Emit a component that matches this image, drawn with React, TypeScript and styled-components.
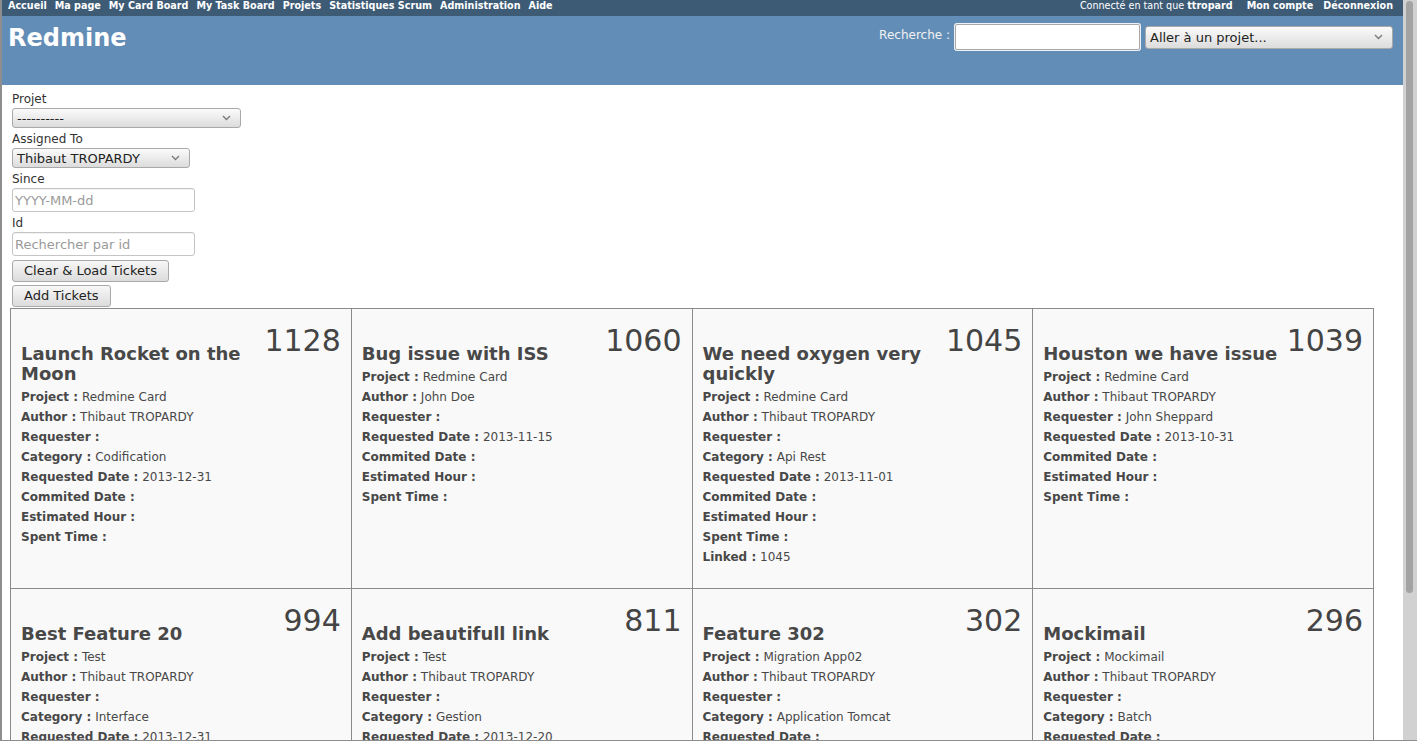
import React from 'react';
import styled, { createGlobalStyle } from 'styled-components';

const GlobalStyle = createGlobalStyle`
  html, body {
    margin: 0;
    padding: 0;
    overflow: hidden;
    background: #fff;
  }
  body {
    font-family: "DejaVu Sans", Verdana, sans-serif;
    font-size: 12px;
    color: #484848;
  }
  * {
    box-sizing: border-box;
  }
`;

type Ticket = {
  id: number;
  title: string;
  fields: [string, string][];
};

const tickets: Ticket[] = [
  {
    id: 1128,
    title: 'Launch Rocket on the Moon',
    fields: [
      ['Project', 'Redmine Card'],
      ['Author', 'Thibaut TROPARDY'],
      ['Requester', ''],
      ['Category', 'Codification'],
      ['Requested Date', '2013-12-31'],
      ['Commited Date', ''],
      ['Estimated Hour', ''],
      ['Spent Time', ''],
    ],
  },
  {
    id: 1060,
    title: 'Bug issue with ISS',
    fields: [
      ['Project', 'Redmine Card'],
      ['Author', 'John Doe'],
      ['Requester', ''],
      ['Requested Date', '2013-11-15'],
      ['Commited Date', ''],
      ['Estimated Hour', ''],
      ['Spent Time', ''],
    ],
  },
  {
    id: 1045,
    title: 'We need oxygen very quickly',
    fields: [
      ['Project', 'Redmine Card'],
      ['Author', 'Thibaut TROPARDY'],
      ['Requester', ''],
      ['Category', 'Api Rest'],
      ['Requested Date', '2013-11-01'],
      ['Commited Date', ''],
      ['Estimated Hour', ''],
      ['Spent Time', ''],
      ['Linked', '1045'],
    ],
  },
  {
    id: 1039,
    title: 'Houston we have issue',
    fields: [
      ['Project', 'Redmine Card'],
      ['Author', 'Thibaut TROPARDY'],
      ['Requester', 'John Sheppard'],
      ['Requested Date', '2013-10-31'],
      ['Commited Date', ''],
      ['Estimated Hour', ''],
      ['Spent Time', ''],
    ],
  },
  {
    id: 994,
    title: 'Best Feature 20',
    fields: [
      ['Project', 'Test'],
      ['Author', 'Thibaut TROPARDY'],
      ['Requester', ''],
      ['Category', 'Interface'],
      ['Requested Date', '2013-12-31'],
      ['Commited Date', ''],
      ['Estimated Hour', ''],
      ['Spent Time', ''],
    ],
  },
  {
    id: 811,
    title: 'Add beautifull link',
    fields: [
      ['Project', 'Test'],
      ['Author', 'Thibaut TROPARDY'],
      ['Requester', ''],
      ['Category', 'Gestion'],
      ['Requested Date', '2013-12-20'],
      ['Commited Date', ''],
      ['Estimated Hour', ''],
      ['Spent Time', ''],
    ],
  },
  {
    id: 302,
    title: 'Feature 302',
    fields: [
      ['Project', 'Migration App02'],
      ['Author', 'Thibaut TROPARDY'],
      ['Requester', ''],
      ['Category', 'Application Tomcat'],
      ['Requested Date', ''],
      ['Commited Date', ''],
      ['Estimated Hour', ''],
      ['Spent Time', ''],
    ],
  },
  {
    id: 296,
    title: 'Mockimail',
    fields: [
      ['Project', 'Mockimail'],
      ['Author', 'Thibaut TROPARDY'],
      ['Requester', ''],
      ['Category', 'Batch'],
      ['Requested Date', ''],
      ['Commited Date', ''],
      ['Estimated Hour', ''],
      ['Spent Time', ''],
    ],
  },
];

const menuItems = [
  'Accueil',
  'Ma page',
  'My Card Board',
  'My Task Board',
  'Projets',
  'Statistiques Scrum',
  'Administration',
  'Aide',
];

const Chevron = () => (
  <svg width="9" height="6" viewBox="0 0 9 6">
    <path d="M1 1 L4.5 4.5 L8 1" fill="none" stroke="#7a7a7a" strokeWidth="1.4" />
  </svg>
);

const App = () => {
  return (
    <>
      <GlobalStyle />
      <Frame>
        <Page>
          <TopMenu>
            <MenuList>
              {menuItems.map((item) => (
                <MenuLink key={item}>{item}</MenuLink>
              ))}
            </MenuList>
            <AccountBox>
              <LoggedAs>
                Connecté en tant que <b>ttropard</b>
              </LoggedAs>
              <AccountMenu>
                <MenuLink>Mon compte</MenuLink>
                <MenuLink>Déconnexion</MenuLink>
              </AccountMenu>
            </AccountBox>
          </TopMenu>

          <Header>
            <Title>Redmine</Title>
            <QuickSearch>
              <SearchLabel>Recherche :</SearchLabel>
              <SearchInput />
              <SelectBox width={248} height={23}>
                <span>Aller à un projet...</span>
                <Chevron />
              </SelectBox>
            </QuickSearch>
          </Header>

          <Main>
            <Filters>
              <Label>Projet</Label>
              <SelectBox width={229} height={20}>
                <span>----------</span>
                <Chevron />
              </SelectBox>
              <Label>Assigned To</Label>
              <SelectBox width={178} height={20}>
                <span>Thibaut TROPARDY</span>
                <Chevron />
              </SelectBox>
              <Label>Since</Label>
              <TextInput placeholder="YYYY-MM-dd" />
              <Label>Id</Label>
              <TextInput placeholder="Rechercher par id" />
              <Button gap={4}>Clear &amp; Load Tickets</Button>
              <Button gap={3}>Add Tickets</Button>
            </Filters>

            <CardGrid>
              {tickets.map((t) => (
                <Card key={t.id}>
                  <TicketNumber>{t.id}</TicketNumber>
                  <CardTitle>{t.title}</CardTitle>
                  {t.fields.map(([name, value]) => (
                    <Field key={name}>
                      <b>{name} :</b> {value}
                    </Field>
                  ))}
                </Card>
              ))}
            </CardGrid>
          </Main>
        </Page>
        <ScrollTrack>
          <ScrollThumb />
        </ScrollTrack>
      </Frame>
    </>
  );
};

export default App;

const Frame = styled.div`
  display: flex;
  width: 1417px;
  height: 741px;
  border-left: 2px solid #8e8e8e;
  border-bottom: 1px solid #8e8e8e;
  overflow: hidden;
`;

const Page = styled.div`
  flex: 1;
  min-width: 0;
  overflow: hidden;
  background: #fff;
`;

const TopMenu = styled.div`
  display: flex;
  justify-content: space-between;
  height: 16px;
  padding: 0 10px 0 6px;
  background: #3e5b76;
  color: #fff;
  font-size: 9.6px;
  line-height: 12px;
`;

const MenuList = styled.div`
  display: flex;
  gap: 8px;
`;

const AccountMenu = styled.div`
  display: flex;
  gap: 10px;
`;

const MenuLink = styled.span`
  font-weight: bold;
  color: #fff;
`;

const AccountBox = styled.div`
  display: flex;
  gap: 14px;
`;

const LoggedAs = styled.span`
  color: #fff;
`;

const Header = styled.div`
  display: flex;
  justify-content: space-between;
  align-items: flex-start;
  height: 69px;
  padding: 0 10px 0 6px;
  background: #628db6;
`;

const Title = styled.h1`
  margin: 0;
  padding-top: 8px;
  font-size: 24px;
  line-height: 28.8px;
  font-weight: bold;
  color: #fff;
`;

const QuickSearch = styled.div`
  display: flex;
  align-items: center;
  margin-top: 8px;
`;

const SearchLabel = styled.span`
  color: #f2f2f2;
  font-size: 12px;
  margin-top: -5px;
`;

const SearchInput = styled.input`
  width: 185px;
  height: 26px;
  margin: 0 5px 0 5px;
  border: 1px solid #a7a7a7;
  border-radius: 2px;
  background: #fff;
  box-shadow: 0 0 0 1px #eef2f6;
  outline: none;
`;

const SelectBox = styled.div<{ width: number; height: number }>`
  display: flex;
  align-items: center;
  justify-content: space-between;
  width: ${({ width }) => width}px;
  height: ${({ height }) => height}px;
  padding: 0 9px 0 4px;
  border: 1px solid #a9a9a9;
  border-radius: 3px;
  background: linear-gradient(#fbfbfb, #dcdcdc);
  color: #222;
  font-size: 13px;
  white-space: nowrap;
`;

const Main = styled.div`
  padding: 3px 0 0 8px;
`;

const Filters = styled.div`
  display: flex;
  flex-direction: column;
  align-items: flex-start;
  padding-left: 2px;
`;

const Label = styled.label`
  display: block;
  height: 20px;
  padding-top: 1px;
  line-height: 20px;
  font-size: 12px;
  color: #333;
`;

const TextInput = styled.input`
  width: 183px;
  height: 24px;
  padding: 0 2px;
  border: 1px solid #c5c5c5;
  border-radius: 3px;
  background: #fff;
  box-shadow: inset 0 1px 1px rgba(0, 0, 0, 0.06);
  font-family: "DejaVu Sans", Verdana, sans-serif;
  font-size: 13px;
  color: #333;
  outline: none;
  &::placeholder {
    color: #9a9a9a;
  }
`;

const Button = styled.button<{ gap: number }>`
  height: 22px;
  margin-top: ${({ gap }) => gap}px;
  padding: 0 11px;
  border: 1px solid #a9a9a9;
  border-radius: 3px;
  background: linear-gradient(#f7f7f7, #dcdcdc);
  font-family: "DejaVu Sans", Verdana, sans-serif;
  font-size: 13px;
  color: #222;
  line-height: 20px;
`;

const CardGrid = styled.div`
  display: grid;
  grid-template-columns: repeat(4, 1fr);
  gap: 1px;
  width: 1364px;
  margin-top: 1px;
  border: 1px solid #8a8a8a;
  background: #8a8a8a;
`;

const Card = styled.div`
  height: 279px;
  padding: 10px;
  background: #f9f9f9;
  overflow: hidden;
`;

const TicketNumber = styled.div`
  float: right;
  margin-top: 5px;
  font-size: 30px;
  line-height: 34px;
  color: #444;
`;

const CardTitle = styled.h3`
  margin: 25px 0 3px;
  font-size: 18px;
  line-height: 20px;
  font-weight: bold;
  color: #484848;
`;

const Field = styled.div`
  line-height: 20px;
  font-size: 12px;
  color: #484848;
  b {
    font-weight: bold;
  }
`;

const ScrollTrack = styled.div`
  width: 14px;
  flex-shrink: 0;
  padding: 1px 4px 0 3px;
  background: #d1d1d1;
`;

const ScrollThumb = styled.div`
  height: 592px;
  border-radius: 4px;
  background: #a3a3a3;
`;
